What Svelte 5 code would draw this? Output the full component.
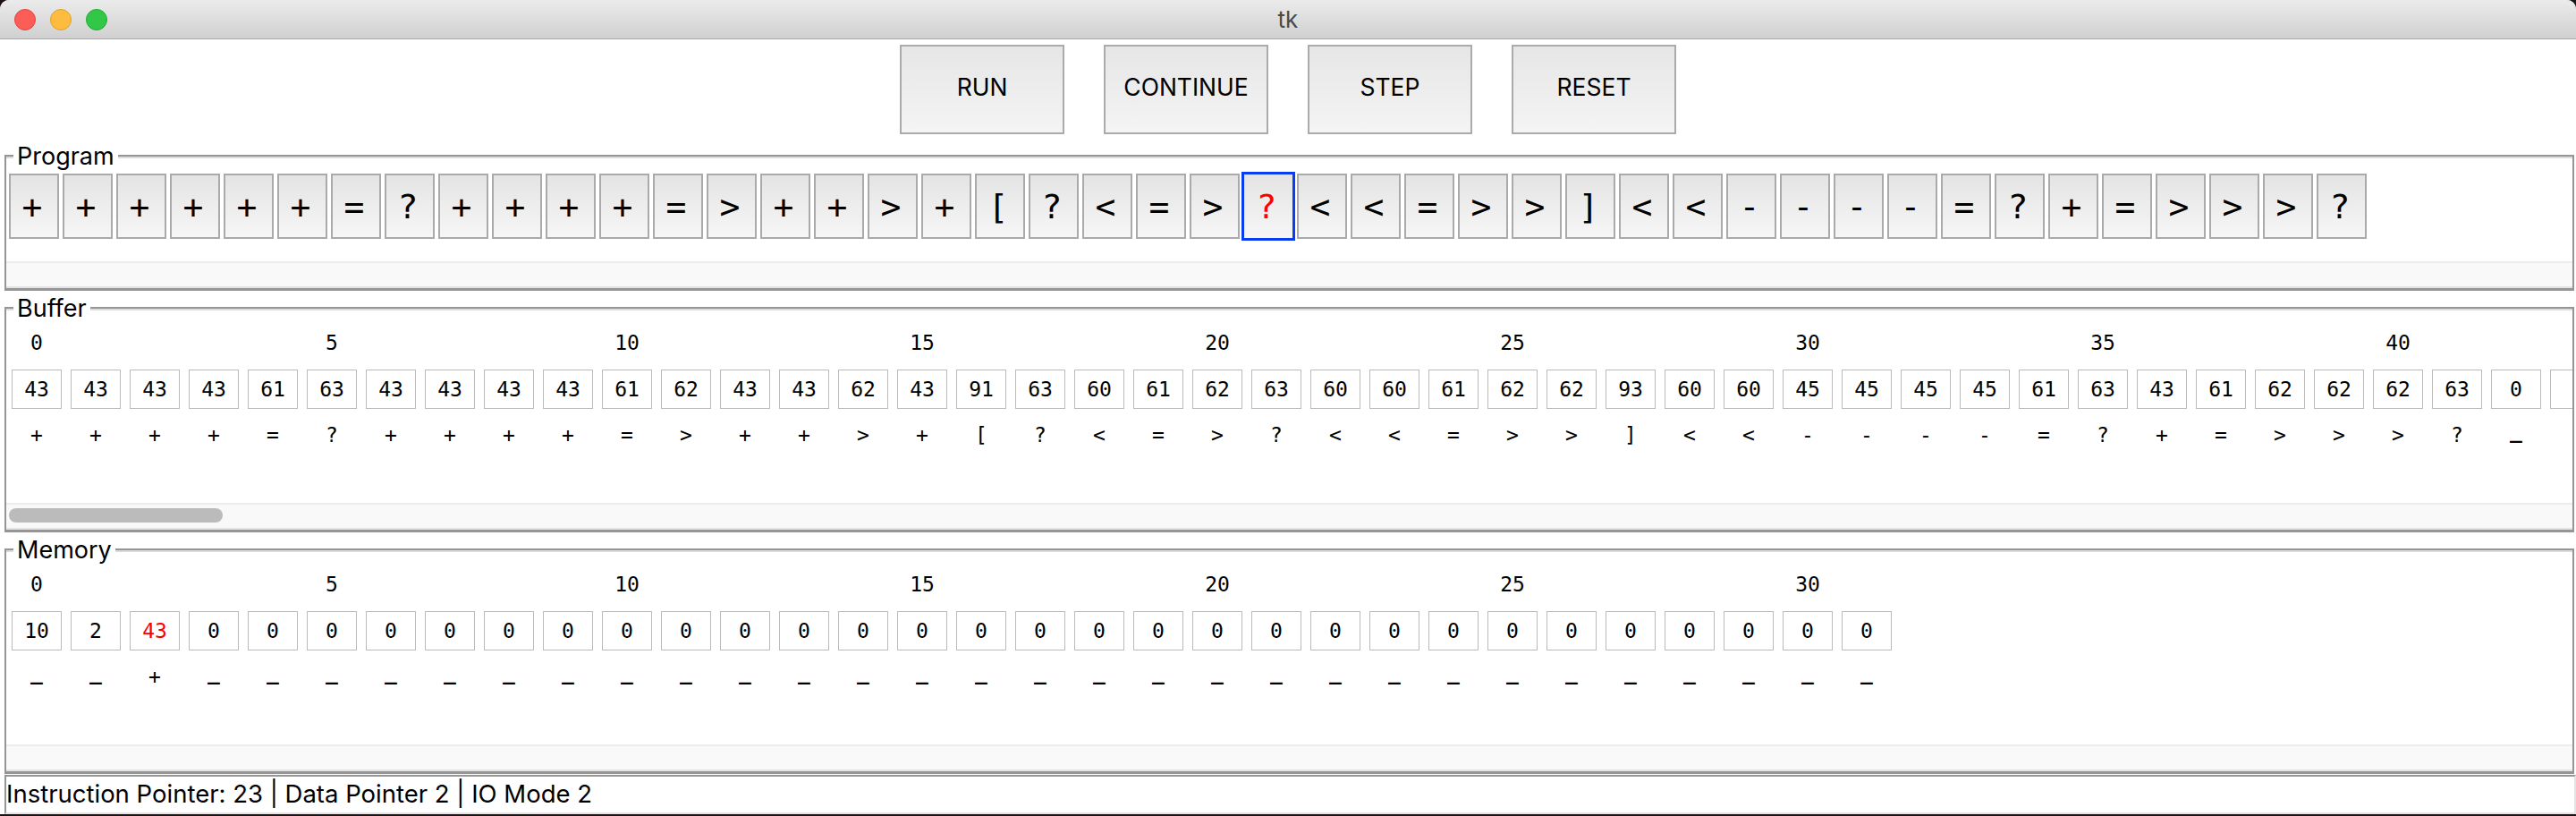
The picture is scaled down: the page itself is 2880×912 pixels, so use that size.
<script>
  const program = "++++++=?++++=>++>+[?<=>?<<=>>]<<----=?+=>>>?".split("");
  const bufferCodes = [43,43,43,43,61,63,43,43,43,43,61,62,43,43,62,43,91,63,60,61,62,63,60,60,61,62,62,93,60,60,45,45,45,45,61,63,43,61,62,62,62,63,0,0];
  let memory = Array(32).fill(0);
  memory[0] = 10;
  memory[1] = 2;
  memory[2] = 43;

  const ip = 23;
  const dp = 2;

  function charOf(code) {
    return code < 32 ? "_" : String.fromCharCode(code);
  }
</script>

<div class="window">
  <header class="titlebar">
    <div class="lights">
      <span class="light red"></span>
      <span class="light yellow"></span>
      <span class="light green"></span>
    </div>
    <span class="title">tk</span>
  </header>

  <div class="toolbar">
    <button class="action">RUN</button>
    <button class="action">CONTINUE</button>
    <button class="action">STEP</button>
    <button class="action">RESET</button>
  </div>

  <section class="panel program">
    <span class="legend">Program</span>
    <div class="view">
      <div class="ops">
        {#each program as op, i}
          <button class="op" class:current={i === ip}>{op}</button>
        {/each}
      </div>
    </div>
    <div class="track"></div>
  </section>

  <section class="panel">
    <span class="legend">Buffer</span>
    <div class="view">
      <div class="tape">
        {#each bufferCodes as code, i}
          <div class="col">
            <span class="index">{i % 5 === 0 ? i : ""}</span>
            <span class="cell">{i < 43 ? code : ""}</span>
            <span class="char" class:blank={code === 0}>{i < 43 ? charOf(code) : ""}</span>
          </div>
        {/each}
      </div>
    </div>
    <div class="track"><div class="thumb"></div></div>
  </section>

  <section class="panel">
    <span class="legend">Memory</span>
    <div class="view">
      <div class="tape">
        {#each memory as value, i}
          <div class="col">
            <span class="index">{i % 5 === 0 ? i : ""}</span>
            <span class="cell" class:active={i === dp}>{value}</span>
            <span class="char" class:blank={value < 32}>{charOf(value)}</span>
          </div>
        {/each}
      </div>
    </div>
    <div class="track"></div>
  </section>

  <footer class="status">Instruction Pointer: {ip} | Data Pointer {dp} | IO Mode 2</footer>
</div>

<style>
  :global(body) {
    margin: 0;
    background: #1c1414;
  }
  .window {
    width: 2880px;
    height: 910px;
    display: flex;
    flex-direction: column;
    overflow: hidden;
    font-family: Inter, "Liberation Sans", sans-serif;
    color: #000;
    background: #fff;
    border-radius: 10px 10px 0 0;
  }
  .titlebar {
    flex: none;
    height: 44px;
    box-sizing: border-box;
    display: flex;
    align-items: center;
    justify-content: center;
    position: relative;
    background: linear-gradient(#ebebeb, #d0d0d0);
    border-bottom: 1px solid #a8a8a8;
  }
  .lights {
    position: absolute;
    left: 16px;
    top: 10px;
    display: flex;
    gap: 16px;
  }
  .light {
    width: 24px;
    height: 24px;
    border-radius: 50%;
    box-sizing: border-box;
  }
  .red { background: #fc5d57; border: 1px solid #e0443e; }
  .yellow { background: #fdbc40; border: 1px solid #dfa023; }
  .green { background: #33c748; border: 1px solid #1dad2b; }
  .title {
    font-size: 26px;
    color: #4a4a4a;
  }
  .toolbar {
    flex: none;
    height: 129px;
    display: flex;
    justify-content: center;
    align-items: flex-start;
    gap: 44px;
    padding-top: 6px;
    box-sizing: border-box;
  }
  .action {
    width: 184px;
    height: 100px;
    padding: 0 0 6px;
    font: 26.5px Inter, "Liberation Sans", sans-serif;
    color: #000;
    background: linear-gradient(#e6e6e6, #f4f4f4);
    border: 2px solid #aaa;
  }
  .panel {
    flex: none;
    position: relative;
    box-sizing: border-box;
    margin: 0 2px 18px 5px;
    height: 252px;
    border: solid #959595;
    border-width: 2px 2px 3px 2px;
    box-shadow: inset 0 2px #dcdcdc;
    display: flex;
    flex-direction: column;
  }
  .panel.program {
    height: 152px;
  }
  .panel:nth-of-type(3) {
    margin-bottom: 1px;
  }
  .legend {
    position: absolute;
    top: -15px;
    left: 8px;
    padding: 0 4px;
    background: #fff;
    font-size: 27px;
    line-height: 30px;
  }
  .view {
    flex: 1;
    overflow: hidden;
    padding: 14px 0 0 6px;
  }
  .program .view {
    padding: 17px 0 0 3px;
  }
  .ops {
    display: flex;
    gap: 4px;
    align-items: center;
  }
  .op {
    flex: none;
    width: 56px;
    height: 73px;
    padding: 0 4px 0 0;
    font: 38px "DejaVu Sans Mono", monospace;
    color: #000;
    background: linear-gradient(#e4e4e4, #f6f6f6);
    border: 2px solid #aaa;
  }
  .op.current {
    width: 60px;
    height: 77px;
    margin: 0 -2px;
    color: #f00;
    border: 3px solid #0a3cf0;
  }
  .tape {
    display: flex;
    gap: 10px;
  }
  .col {
    flex: none;
    width: 56px;
    display: flex;
    flex-direction: column;
    align-items: center;
    font-family: "DejaVu Sans Mono", monospace;
    font-size: 23px;
  }
  .index {
    height: 48px;
    line-height: 48px;
    white-space: nowrap;
  }
  .cell {
    box-sizing: border-box;
    width: 56px;
    height: 44px;
    line-height: 42px;
    margin-top: 6px;
    text-align: center;
    border: 1px solid #bbb;
  }
  .cell.active {
    color: #f00;
  }
  .char {
    height: 30px;
    line-height: 30px;
    margin-top: 14px;
  }
  .char.blank {
    line-height: 22px;
    font-weight: bold;
  }
  .track {
    flex: none;
    height: 30px;
    box-sizing: border-box;
    background: #f9f9f9;
    border-top: 2px solid #ededed;
    border-bottom: 2px solid #e4e4e4;
    padding: 4px 0 0 3px;
  }
  .thumb {
    width: 239px;
    height: 16px;
    border-radius: 8px;
    background: #bbb;
  }
  .status {
    flex: 1;
    margin-left: 5px;
    box-sizing: border-box;
    border: solid #e4e4e4;
    border-width: 2px;
    border-top-color: #959595;
    border-left-color: #959595;
    padding-top: 3px;
    font-size: 27.5px;
    line-height: 32px;
  }
</style>
